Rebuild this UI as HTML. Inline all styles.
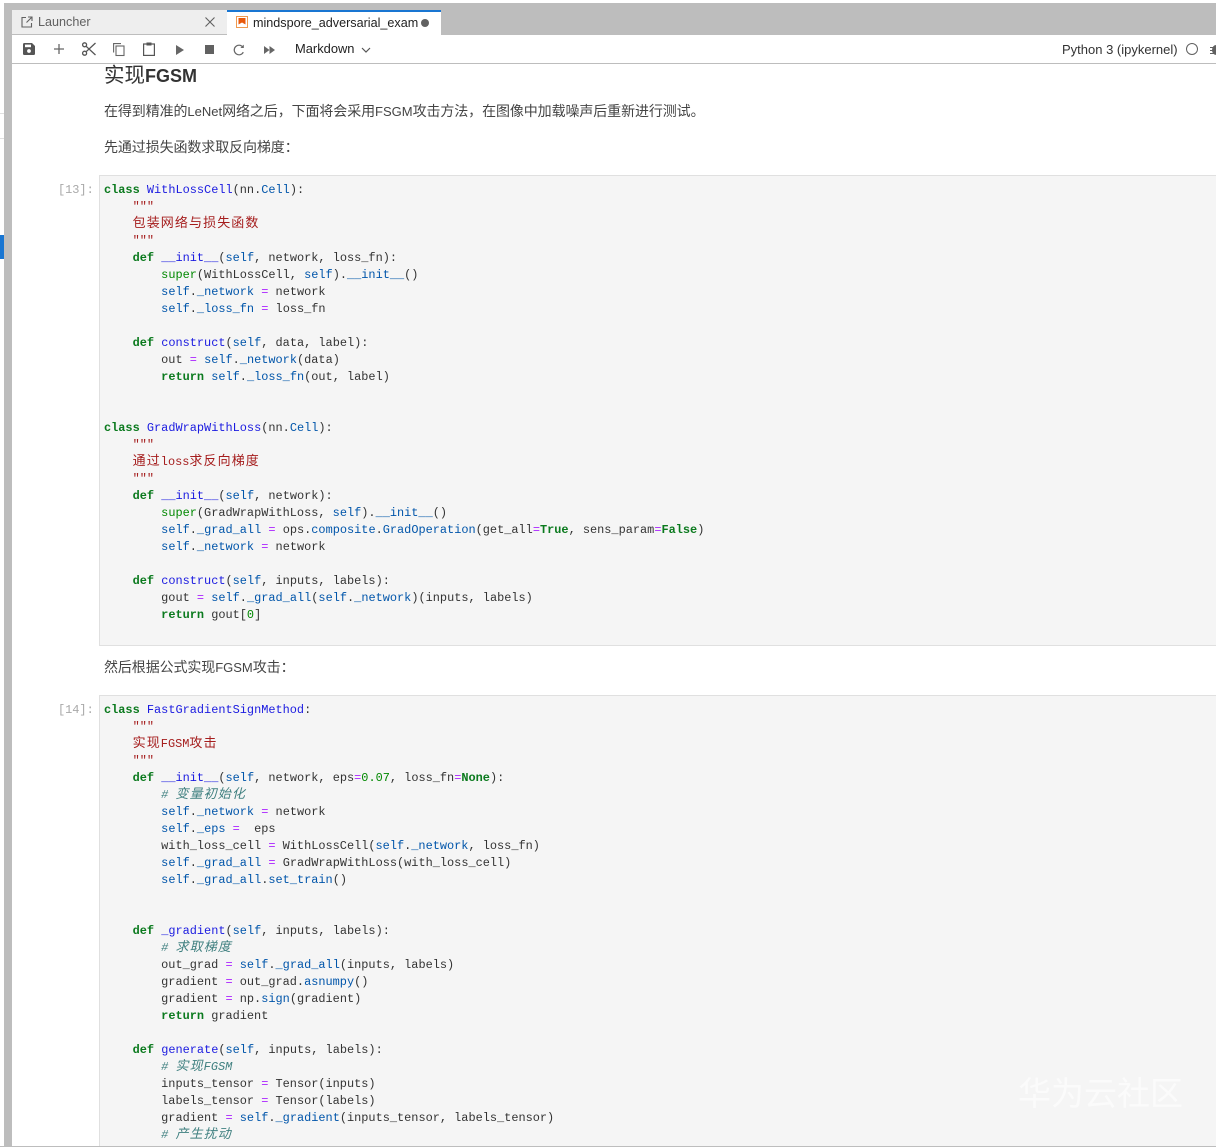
<!DOCTYPE html>
<html lang="zh">
<head>
<meta charset="utf-8">
<title>mindspore_adversarial_exam</title>
<style>
html,body{margin:0;padding:0;background:#fff;width:1216px;height:1147px;overflow:hidden;}
#root{position:relative;width:1216px;height:1147px;overflow:hidden;font-family:"Liberation Sans","Noto Sans CJK SC",sans-serif;color:#333;}
.a{position:absolute;}
.t{position:absolute;white-space:nowrap;}
svg{position:absolute;overflow:visible;}
.md{position:absolute;left:104px;font-size:14px;line-height:20px;color:#444;white-space:nowrap;letter-spacing:-.1px;}
.md u{text-decoration:none;font-size:13px;letter-spacing:0;}
.prompt{position:absolute;left:58px;font:11.91px/17px "Liberation Mono",monospace;color:#a8a8a8;}
.cell{position:absolute;left:99px;width:1130px;background:#f5f5f5;border:1px solid #e0e0e0;box-sizing:border-box;}
pre{position:absolute;left:104px;margin:0;font:11.91px/17px "Liberation Mono","Noto Sans CJK SC",monospace;color:#333;}
.k{color:#0b7a1e;font-weight:bold}
.n{color:#1a1ae0}
.s{color:#05a}
.o{color:#a2f}
.d{color:#080}
.r{color:#a51d1d}
.c{color:#408080;font-style:italic}
.z{font-family:"Noto Sans CJK SC",sans-serif;font-size:13px;letter-spacing:1.1px;line-height:0}
</style>
</head>
<body>
<div id="root">
<!-- left strip -->
<div class="a" style="left:0;top:113px;width:4px;height:1px;background:#e0e0e0"></div>
<div class="a" style="left:0;top:138px;width:4px;height:1px;background:#e0e0e0"></div>
<div class="a" style="left:0;top:235px;width:4px;height:24px;background:#1976d2"></div>
<div class="a" style="left:4px;top:3px;width:8px;height:1144px;background:#bdbdbd"></div>
<div class="a" style="left:4px;top:3px;width:1212px;height:32px;background:#bdbdbd"></div>

<!-- tabs -->
<div class="a" style="left:12px;top:10px;width:215px;height:24px;background:#eeeeee"></div>
<div class="a" style="left:227px;top:10px;width:214px;height:26px;background:#fff;border-top:2px solid #1976d2;box-sizing:border-box"></div>
<svg style="left:21px;top:16px" width="12" height="12" viewBox="0 0 12 12" fill="none" stroke="#616161" stroke-width="1.1"><path d="M5 1.500H1v9.500h9.500V7"/><path d="M7 1h4v4M11 1L5.500 6.500"/></svg>
<div class="t" style="left:38px;top:14px;font-size:12.6px;line-height:17px;color:#616161">Launcher</div>
<svg style="left:205px;top:17px" width="10" height="10" viewBox="0 0 10 10" stroke="#616161" stroke-width="1.1"><path d="M0.500 0.500L9.500 9.500M9.500 0.500L0.500 9.500"/></svg>
<svg style="left:236px;top:16px" width="12" height="12" viewBox="0 0 12 12"><rect x=".5" y=".5" width="11" height="11" fill="#fff" stroke="#ef9a50"/><path d="M2.500 2h7v6.500L6 6.500 2.500 8.500z" fill="#e8590c"/></svg>
<div class="t" style="left:253px;top:15px;font-size:12.6px;line-height:17px;color:#222">mindspore_adversarial_exam</div>
<div class="a" style="left:421px;top:19px;width:8px;height:8px;border-radius:50%;background:#616161"></div>

<!-- toolbar -->
<div class="a" style="left:12px;top:35px;width:1204px;height:28px;background:#fff"></div>
<div class="a" style="left:12px;top:63px;width:1204px;height:1px;background:#bdbdbd"></div>
<svg style="left:23px;top:43px" width="12" height="12" viewBox="0 0 12 12" fill="#555"><path d="M1.300 0H9l3 3v7.700c0 .7-.6 1.300-1.300 1.300H1.300C.6 12 0 11.400 0 10.700V1.300C0 .6.600 0 1.300 0z"/><rect x="2" y="1.600" width="6" height="2.600" fill="#fff"/><circle cx="6" cy="8" r="1.900" fill="#fff"/></svg>
<svg style="left:54px;top:44px" width="10" height="10" viewBox="0 0 10 10" stroke="#666" stroke-width="1.300"><path d="M5 0v10M0 5h10"/></svg>
<svg style="left:82px;top:42px" width="14" height="14" viewBox="0 0 14 14" fill="none" stroke="#555" stroke-width="1.300"><circle cx="2.600" cy="2.800" r="2"/><circle cx="2.600" cy="11.200" r="2"/><path d="M4 4.200L13.500 13M4 9.800L13.500 1"/></svg>
<svg style="left:113px;top:43px" width="12" height="13" viewBox="0 0 12 13" fill="none" stroke="#666" stroke-width="1.100"><path d="M.6 9.500V.6H8"/><rect x="3" y="3" width="8" height="9.500"/></svg>
<svg style="left:143px;top:42px" width="12" height="14" viewBox="0 0 12 14" fill="none" stroke="#555" stroke-width="1.200"><rect x=".6" y="2" width="10.800" height="11.400"/><rect x="3.500" y=".5" width="5" height="3" fill="#555" stroke="none"/></svg>
<svg style="left:176px;top:45px" width="8" height="10" viewBox="0 0 8 10" fill="#666"><path d="M0 0l8 5-8 5z"/></svg>
<div class="a" style="left:205px;top:45px;width:9px;height:9px;background:#616161"></div>
<svg style="left:233px;top:44px" width="12" height="12" viewBox="0 0 12 12" fill="none" stroke="#666" stroke-width="1.200"><path d="M10.300 8.200A4.800 4.800 0 1 1 9.800 3"/><path d="M10.800 .6v3.400H7.400z" fill="#666" stroke="none"/></svg>
<svg style="left:264px;top:46px" width="11" height="8" viewBox="0 0 11 8" fill="#666"><path d="M0 0l5.500 4L0 8zM5.500 0L11 4 5.500 8z"/></svg>
<div class="t" style="left:295px;top:40px;font-size:12.9px;line-height:17px;color:#222">Markdown</div>
<svg style="left:361px;top:47px" width="10" height="6" viewBox="0 0 10 6" fill="none" stroke="#555" stroke-width="1.200"><path d="M1 1l4 4 4-4"/></svg>
<div class="t" style="left:1062px;top:41px;font-size:13px;line-height:17px;color:#333">Python 3 (ipykernel)</div>
<div class="a" style="left:1186px;top:43px;width:12px;height:12px;border:1.200px solid #616161;border-radius:50%;box-sizing:border-box"></div>
<svg style="left:1210px;top:43px" width="12" height="13" viewBox="0 0 12 13" fill="#616161"><ellipse cx="6" cy="7" rx="4" ry="5"/><path d="M0 4h12v1H0zM0 7h12v1H0zM0 10h12v1H0z"/></svg>

<!-- markdown -->
<div class="md" style="top:64px;font-size:20.5px;line-height:24px;color:#333;letter-spacing:0">实现<b style="font-size:18px">FGSM</b></div>
<div class="md" style="top:101px">在得到精准的<u>LeNet</u>网络之后，下面将会采用<u>FSGM</u>攻击方法，在图像中加载噪声后重新进行测试。</div>
<div class="md" style="top:137px">先通过损失函数求取反向梯度：</div>

<div class="prompt" style="top:182px">[13]:</div>
<div class="cell" style="top:175px;height:471px"></div>
<pre style="top:182px"><span class="k">class</span> <span class="n">WithLossCell</span>(nn.<span class="s">Cell</span>):
    <span class="r">"""</span>
    <span class="r z">包装网络与损失函数</span>
    <span class="r">"""</span>
    <span class="k">def</span> <span class="n">__init__</span>(<span class="s">self</span>, network, loss_fn):
        <span class="d">super</span>(WithLossCell, <span class="s">self</span>).<span class="s">__init__</span>()
        <span class="s">self</span>.<span class="s">_network</span> <span class="o">=</span> network
        <span class="s">self</span>.<span class="s">_loss_fn</span> <span class="o">=</span> loss_fn

    <span class="k">def</span> <span class="n">construct</span>(<span class="s">self</span>, data, label):
        out <span class="o">=</span> <span class="s">self</span>.<span class="s">_network</span>(data)
        <span class="k">return</span> <span class="s">self</span>.<span class="s">_loss_fn</span>(out, label)


<span class="k">class</span> <span class="n">GradWrapWithLoss</span>(nn.<span class="s">Cell</span>):
    <span class="r">"""</span>
    <span class="r"><span class="z">通过</span>loss<span class="z">求反向梯度</span></span>
    <span class="r">"""</span>
    <span class="k">def</span> <span class="n">__init__</span>(<span class="s">self</span>, network):
        <span class="d">super</span>(GradWrapWithLoss, <span class="s">self</span>).<span class="s">__init__</span>()
        <span class="s">self</span>.<span class="s">_grad_all</span> <span class="o">=</span> ops.<span class="s">composite</span>.<span class="s">GradOperation</span>(get_all<span class="o">=</span><span class="k">True</span>, sens_param<span class="o">=</span><span class="k">False</span>)
        <span class="s">self</span>.<span class="s">_network</span> <span class="o">=</span> network

    <span class="k">def</span> <span class="n">construct</span>(<span class="s">self</span>, inputs, labels):
        gout <span class="o">=</span> <span class="s">self</span>.<span class="s">_grad_all</span>(<span class="s">self</span>.<span class="s">_network</span>)(inputs, labels)
        <span class="k">return</span> gout[<span class="d">0</span>]</pre>

<div class="md" style="top:657px">然后根据公式实现<u>FGSM</u>攻击：</div>

<div class="prompt" style="top:702px">[14]:</div>
<div class="cell" style="top:695px;height:470px"></div>
<pre style="top:702px"><span class="k">class</span> <span class="n">FastGradientSignMethod</span>:
    <span class="r">"""</span>
    <span class="r"><span class="z">实现</span>FGSM<span class="z">攻击</span></span>
    <span class="r">"""</span>
    <span class="k">def</span> <span class="n">__init__</span>(<span class="s">self</span>, network, eps<span class="o">=</span><span class="d">0.07</span>, loss_fn<span class="o">=</span><span class="k">None</span>):
        <span class="c"># <span class="z">变量初始化</span></span>
        <span class="s">self</span>.<span class="s">_network</span> <span class="o">=</span> network
        <span class="s">self</span>.<span class="s">_eps</span> <span class="o">=</span>  eps
        with_loss_cell <span class="o">=</span> WithLossCell(<span class="s">self</span>.<span class="s">_network</span>, loss_fn)
        <span class="s">self</span>.<span class="s">_grad_all</span> <span class="o">=</span> GradWrapWithLoss(with_loss_cell)
        <span class="s">self</span>.<span class="s">_grad_all</span>.<span class="s">set_train</span>()


    <span class="k">def</span> <span class="n">_gradient</span>(<span class="s">self</span>, inputs, labels):
        <span class="c"># <span class="z">求取梯度</span></span>
        out_grad <span class="o">=</span> <span class="s">self</span>.<span class="s">_grad_all</span>(inputs, labels)
        gradient <span class="o">=</span> out_grad.<span class="s">asnumpy</span>()
        gradient <span class="o">=</span> np.<span class="s">sign</span>(gradient)
        <span class="k">return</span> gradient

    <span class="k">def</span> <span class="n">generate</span>(<span class="s">self</span>, inputs, labels):
        <span class="c"># <span class="z">实现</span>FGSM</span>
        inputs_tensor <span class="o">=</span> Tensor(inputs)
        labels_tensor <span class="o">=</span> Tensor(labels)
        gradient <span class="o">=</span> <span class="s">self</span>.<span class="s">_gradient</span>(inputs_tensor, labels_tensor)
        <span class="c"># <span class="z">产生扰动</span></span></pre>

<!-- watermark -->
<div class="t" style="left:1018px;top:1072px;font-size:33px;line-height:38px;color:rgba(255,255,255,.6);font-family:'Noto Sans CJK SC',sans-serif">华为云社区</div>

<!-- bottom edge -->
<div class="a" style="left:0;top:1146px;width:1216px;height:1px;background:#bdbdbd"></div>
</div>
</body>
</html>
